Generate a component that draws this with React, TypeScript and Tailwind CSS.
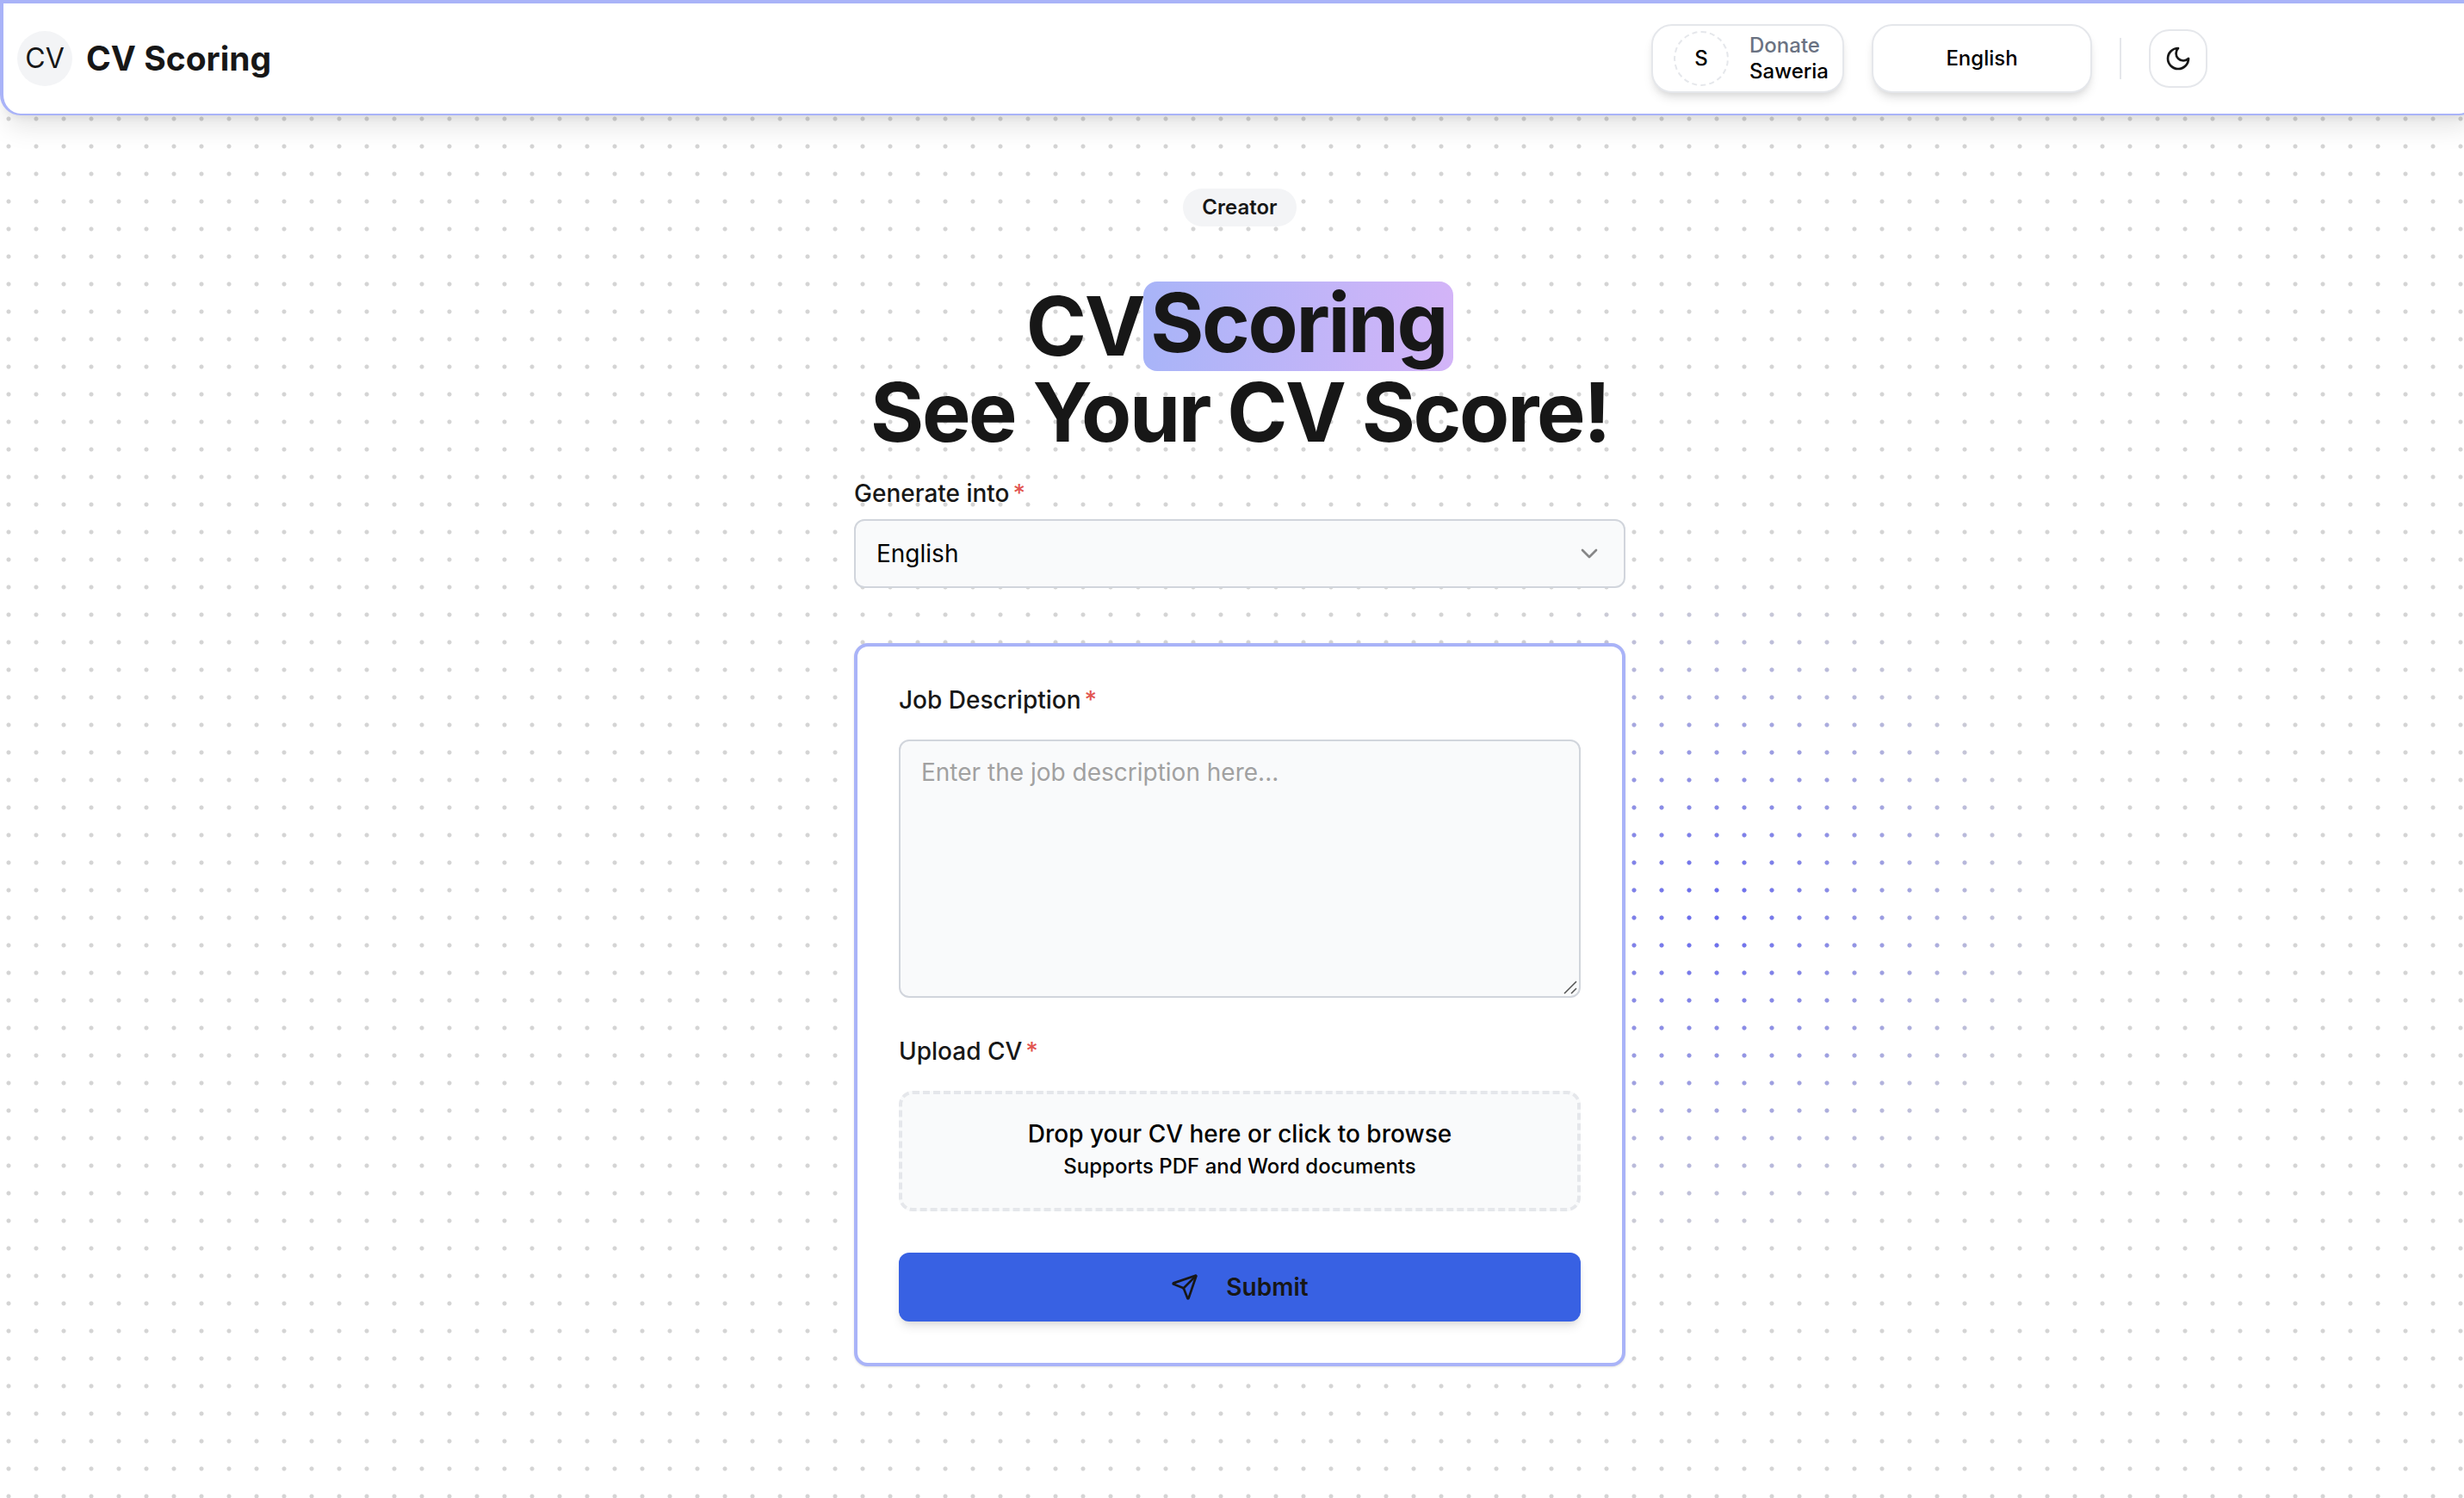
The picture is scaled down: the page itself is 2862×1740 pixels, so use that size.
import type { ReactNode } from "react";
import { ChevronDown, Send } from "lucide-react";

function FieldLabel({ htmlFor, children }: { htmlFor: string; children: ReactNode }) {
  return (
    <label htmlFor={htmlFor} className="flex gap-1 text-[28px] leading-7 font-medium">
      {children}
      <span className="text-[#e25550]">*</span>
    </label>
  );
}

function Header() {
  return (
    <header className="relative rounded-b-3xl border-4 border-b-2 border-[#a9b3f8] bg-white shadow-[0_20px_30px_-6px_rgba(0,0,0,0.1),0_8px_12px_-8px_rgba(0,0,0,0.1)]">
      <div className="flex h-32 max-w-[2576px] items-center justify-between px-4">
        <a href="#" className="flex items-center gap-4">
          <span className="flex size-16 items-center justify-center rounded-full bg-gray-100 text-[32px]">
            CV
          </span>
          <span className="text-[39px] font-bold">CV Scoring</span>
        </a>
        <div className="flex items-center gap-8 text-2xl font-medium text-black">
          <button
            type="button"
            className="flex h-20 items-center gap-6 rounded-3xl border-2 border-gray-200 bg-white pr-4 pl-6 text-left shadow-[0_8px_12px_-2px_rgba(0,0,0,0.1),0_4px_8px_-4px_rgba(0,0,0,0.1)]"
          >
            <span className="flex size-16 items-center justify-center rounded-full border-2 border-dashed border-gray-200">
              S
            </span>
            <span className="flex flex-col leading-[30px]">
              <span className="text-gray-500">Donate</span>
              <span>Saweria</span>
            </span>
          </button>
          <button
            type="button"
            className="h-20 w-64 rounded-3xl border-2 border-gray-200 bg-white shadow-[0_8px_12px_-2px_rgba(0,0,0,0.1),0_4px_8px_-4px_rgba(0,0,0,0.1)]"
          >
            English
          </button>
          <div className="h-12 w-0.5 bg-gray-200" />
          <button
            type="button"
            aria-label="Toggle theme"
            className="flex size-[68px] items-center justify-center rounded-3xl border-2 border-gray-200 bg-white text-neutral-900"
          >
            <svg viewBox="0 0 24 24" className="size-8" fill="none" stroke="currentColor" strokeWidth="2" strokeLinecap="round" strokeLinejoin="round">
              <path d="M12 3a6 6 0 0 0 9 9 9 9 0 1 1-9-9Z" />
            </svg>
          </button>
        </div>
      </div>
    </header>
  );
}

function ScoreForm() {
  return (
    <form className="flex w-full flex-col gap-16">
      <div className="flex flex-col gap-4">
        <FieldLabel htmlFor="language">Generate into</FieldLabel>
        <div className="relative">
          <select
            id="language"
            className="block h-20 w-full appearance-none rounded-xl border-2 border-gray-300 bg-gray-50 px-6 text-[28px] text-black"
          >
            <option>English</option>
          </select>
          <ChevronDown className="pointer-events-none absolute top-6 right-[26px] size-8 opacity-50" />
        </div>
      </div>

      <div className="flex flex-col gap-12 rounded-2xl border-4 border-[#a9b3f8] bg-white p-12 shadow-sm">
        <div className="flex flex-col gap-8">
          <FieldLabel htmlFor="job">Job Description</FieldLabel>
          <div className="relative flex">
            <textarea
              id="job"
              placeholder="Enter the job description here..."
              className="h-[300px] w-full resize-none rounded-xl border-2 border-gray-300 bg-gray-50 px-6 py-4 text-[28px] leading-10 placeholder:text-neutral-400"
            />
            <svg viewBox="0 0 16 16" className="pointer-events-none absolute right-1 bottom-1 size-4 text-neutral-600" fill="none" stroke="currentColor" strokeWidth="1.5">
              <path d="M1 15 15 1M9 15l6-6" />
            </svg>
          </div>
        </div>

        <div className="flex flex-col gap-8">
          <FieldLabel htmlFor="cv">Upload CV</FieldLabel>
          <label
            htmlFor="cv"
            className="relative flex h-[140px] flex-col items-center rounded-2xl border-4 border-dashed border-gray-200 bg-gray-50 pt-[26px] font-medium text-black"
          >
            <span className="text-[28px] leading-10">Drop your CV here or click to browse</span>
            <span className="text-2xl leading-9">Supports PDF and Word documents</span>
            <input id="cv" type="file" accept=".pdf,.doc,.docx" className="sr-only" />
          </label>
        </div>

        <button
          type="button"
          className="flex h-20 items-center justify-center gap-8 rounded-xl bg-[#3861e3] text-[28px] font-semibold shadow-[0_8px_12px_-2px_rgba(0,0,0,0.1),0_4px_8px_-4px_rgba(0,0,0,0.1)]"
        >
          <Send className="size-8" />
          Submit
        </button>
      </div>
    </form>
  );
}

export default function App() {
  return (
    <div className="min-h-screen overflow-hidden bg-white font-[Inter,sans-serif] text-neutral-900">
      <div className="relative -mr-[18px] min-h-screen bg-[radial-gradient(circle_at_10px_10px,#d4d4d4_2px,transparent_3px)] bg-[size:32px_32px]">
        <div className="pointer-events-none absolute inset-0 bg-[radial-gradient(circle_at_10px_10px,#6366f1_2px,transparent_3px)] bg-[size:32px_32px] [mask-image:radial-gradient(400px_circle_at_1990px_1060px,black_0%,transparent_100%)]" />
        <Header />
        <main className="relative mx-auto flex w-full max-w-[896px] flex-col items-center pt-[85px] pb-16">
          <span className="rounded-full bg-gray-100 px-[22px] py-1.5 text-2xl leading-8 font-semibold">Creator</span>
          <h1 className="mt-16 mb-8 flex flex-col items-center text-[95px] leading-24 font-bold tracking-tight whitespace-nowrap">
            <span className="flex items-center">
              CV
              <span className="rounded-2xl bg-linear-to-r from-[#a8b4f8] to-[#d3b4f8] px-2 pb-2">Scoring</span>
            </span>
            <span>See Your CV Score!</span>
          </h1>
          <ScoreForm />
        </main>
      </div>
    </div>
  );
}
